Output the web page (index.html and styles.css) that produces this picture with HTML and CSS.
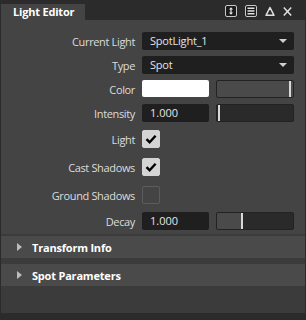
FILE: index.html
```html
<!DOCTYPE html>
<html lang="en">
<head>
  <meta charset="UTF-8">
  <title>Light Editor</title>
  <link rel="stylesheet" href="styles.css">
</head>
<body>
  <div class="window">
    <!-- Title bar with tab and tool icons -->
    <div class="titlebar">
      <div class="tab">Light Editor</div>
      <div class="tools">
        <svg class="tool" width="12" height="12" viewBox="0 0 12 12">
          <rect x="0.5" y="0.5" width="11" height="11" rx="1.5" fill="#1c1c1c" stroke="#c8c8c8"/>
          <line x1="6" y1="3.5" x2="6" y2="8.5" stroke="#e8e8e8" stroke-width="1.2"/>
          <polygon points="4,4.5 6,2.2 8,4.5" fill="#e8e8e8"/>
          <polygon points="4,7.5 6,9.8 8,7.5" fill="#e8e8e8"/>
        </svg>
        <svg class="tool" width="12" height="12" viewBox="0 0 12 12">
          <rect x="0.5" y="0.5" width="11" height="11" rx="1.5" fill="#1c1c1c" stroke="#c8c8c8"/>
          <rect x="2.5" y="2.5" width="7" height="1.5" fill="#e0e0e0"/>
          <rect x="2.5" y="5.2" width="7" height="1.5" fill="#e0e0e0"/>
          <rect x="2.5" y="8" width="7" height="1.5" fill="#e0e0e0"/>
        </svg>
        <svg class="tool" width="10" height="11" viewBox="0 0 10 11">
          <polygon points="5,1.5 1,9.3 9,9.3" fill="none" stroke="#e0e0e0" stroke-width="1.5" stroke-linejoin="round"/>
        </svg>
        <svg class="tool" width="9" height="11" viewBox="0 0 9 11">
          <line x1="0.8" y1="1.5" x2="8.2" y2="9.5" stroke="#e0e0e0" stroke-width="1.5"/>
          <line x1="8.2" y1="1.5" x2="0.8" y2="9.5" stroke="#e0e0e0" stroke-width="1.5"/>
        </svg>
      </div>
    </div>

    <div class="panel">
      <!-- Property rows -->
      <div class="props">
        <div class="row">
          <span class="label">Current Light</span>
          <div class="dropdown">SpotLight_1<span class="arrow"></span></div>
        </div>
        <div class="row">
          <span class="label">Type</span>
          <div class="dropdown">Spot<span class="arrow"></span></div>
        </div>
        <div class="row">
          <span class="label">Color</span>
          <div class="pair">
            <div class="swatch"></div>
            <div class="slider slider-light"><span class="handle" style="left: 72px"></span></div>
          </div>
        </div>
        <div class="row">
          <span class="label">Intensity</span>
          <div class="pair">
            <div class="field">1.000</div>
            <div class="slider"><span class="handle" style="left: 1px"></span></div>
          </div>
        </div>
        <div class="row row-check">
          <span class="label">Light</span>
          <div class="check checked">
            <svg width="18" height="18" viewBox="0 0 18 18"><path d="M4.5 9.2 L7.6 12.2 L13.6 5.8" fill="none" stroke="#000" stroke-width="2.4"/></svg>
          </div>
        </div>
        <div class="row row-check">
          <span class="label">Cast Shadows</span>
          <div class="check checked">
            <svg width="18" height="18" viewBox="0 0 18 18"><path d="M4.5 9.2 L7.6 12.2 L13.6 5.8" fill="none" stroke="#000" stroke-width="2.4"/></svg>
          </div>
        </div>
        <div class="row row-check">
          <span class="label">Ground Shadows</span>
          <div class="check"></div>
        </div>
        <div class="row">
          <span class="label">Decay</span>
          <div class="pair">
            <div class="field">1.000</div>
            <div class="slider"><span class="fill" style="width: 24px"></span><span class="handle" style="left: 24px"></span></div>
          </div>
        </div>
      </div>

      <!-- Collapsed sections -->
      <div class="sections">
        <div class="section"><span class="tri"></span>Transform Info</div>
        <div class="section"><span class="tri"></span>Spot Parameters</div>
      </div>
    </div>
  </div>
</body>
</html>
```

FILE: styles.css
```css
body {
  margin: 0;
  background-color: #2b2b2b;
  font-family: "Open Sans", "Noto Sans", sans-serif;
  font-size: 11px;
  color: #dcdcdc;
}

.window {
  width: 306px;
  height: 320px;
  display: flex;
  flex-direction: column;
  background-color: #2b2b2b;
}

/* Title bar */
.titlebar {
  height: 20px;
  display: flex;
  align-items: flex-end;
  justify-content: space-between;
  padding-left: 1px;
}

.tab {
  width: 72px;
  height: 16px;
  padding-left: 12px;
  background-color: #444444;
  color: #ffffff;
  font-weight: 700;
  font-size: 11px;
  letter-spacing: -0.2px;
  line-height: 16px;
}

.tools {
  display: flex;
  align-items: center;
  align-self: flex-start;
  gap: 8px;
  margin-top: 5px;
  margin-right: 14px;
}

.tool {display: block;}

/* Panel */
.panel {
  flex: 1;
  margin: 0 1px 7px 1px;
  display: flex;
  flex-direction: column;
  background-color: #3b3b3b;
}

.props {
  background-color: #444444;
  padding: 12px 0 4px 0;
  display: flex;
  flex-direction: column;
  gap: 6px;
}

.row {
  height: 18px;
  display: flex;
  align-items: center;
}

.row-check {height: 22px;}

.label {
  width: 134px;
  padding-right: 7px;
  text-align: right;
  white-space: nowrap;
  letter-spacing: -0.35px;
}

.dropdown {
  position: relative;
  width: 144px;
  height: 18px;
  padding-left: 8px;
  background-color: #1f1f1f;
  border-radius: 2px;
  color: #e4e4e4;
  line-height: 18px;
  letter-spacing: -0.2px;
}

.arrow {
  position: absolute;
  right: 7px;
  top: 7px;
  width: 0;
  height: 0;
  border-left: 4px solid transparent;
  border-right: 4px solid transparent;
  border-top: 4px solid #cfcfcf;
}

.pair {
  display: flex;
  gap: 7px;
}

.swatch {
  width: 67px;
  height: 17px;
  background-color: #ffffff;
  border-radius: 2px;
}

.field {
  width: 59px;
  height: 18px;
  padding-left: 8px;
  background-color: #1f1f1f;
  border-radius: 2px;
  color: #e4e4e4;
  line-height: 18px;
}

.slider {
  position: relative;
  width: 76px;
  height: 16px;
  background-color: #2a2a2a;
  border: 1px solid #222222;
  border-radius: 2px;
  overflow: hidden;
}

.slider-light {background-color: #4a4a4a;}

.fill {
  position: absolute;
  left: 0;
  top: 0;
  bottom: 0;
  background-color: #4a4a4a;
}

.handle {
  position: absolute;
  top: 0;
  bottom: 0;
  width: 2px;
  background-color: #d8d8d8;
}

.check {
  width: 16px;
  height: 16px;
  border: 1px solid #5c5c5c;
  border-radius: 2px;
}

.check.checked {
  background-color: #d4d4d4;
  border-color: #d4d4d4;
}

.check svg {
  display: block;
  margin: -1px;
}

/* Sections */
.sections {
  padding-top: 2px;
  display: flex;
  flex-direction: column;
  gap: 6px;
}

.section {
  height: 22px;
  display: flex;
  align-items: center;
  background-color: #4a4a4a;
  color: #ffffff;
  font-weight: 700;
  font-size: 11px;
  letter-spacing: -0.2px;
}

.tri {
  width: 0;
  height: 0;
  margin-left: 16px;
  margin-right: 10px;
  border-top: 4px solid transparent;
  border-bottom: 4px solid transparent;
  border-left: 5px solid #bdbdbd;
}
```
